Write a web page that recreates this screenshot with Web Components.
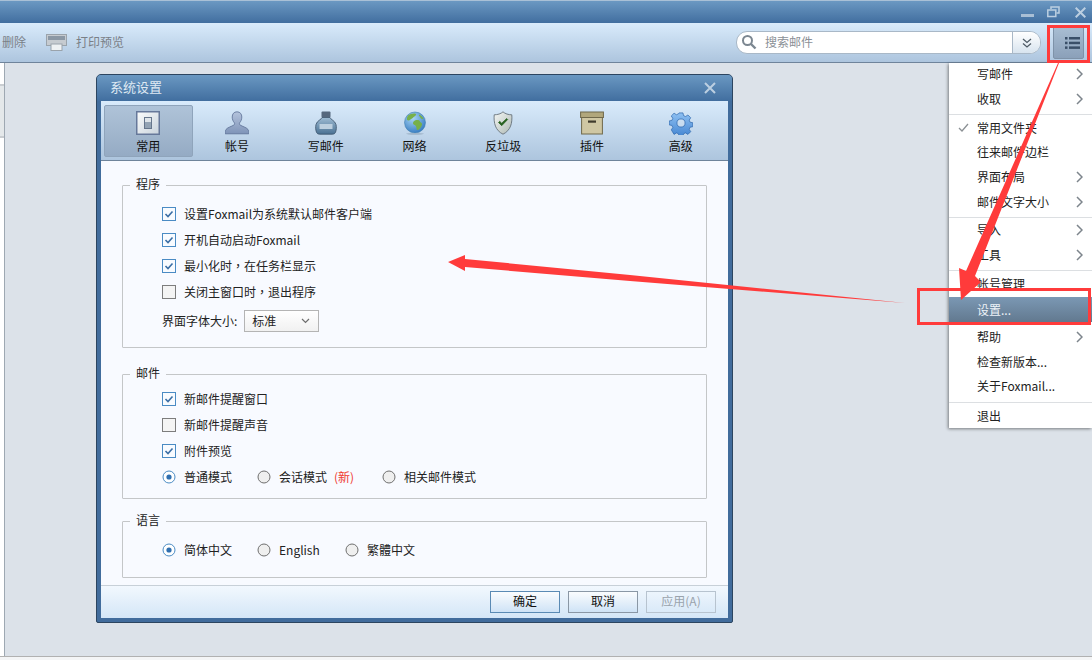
<!DOCTYPE html>
<html lang="zh">
<head>
<meta charset="utf-8">
<title>Foxmail 系统设置</title>
<style>
html, body { margin:0; padding:0; height:100%; overflow:hidden; }
body { font:12px "Noto Sans CJK SC", "Liberation Sans", sans-serif; color:#222; }
.tc { font-family:"Noto Sans CJK TC", sans-serif; }
</style>
</head>
<body>
<fm-app>
	<fm-dialog slot="dialog">
		<fm-group label="程序" style="height:163px;margin-bottom:26px;padding-top:15px">
			<div style="display:flex;flex-direction:column;">
				<fm-check checked>设置Foxmail为系统默认邮件客户端</fm-check>
				<fm-check checked>开机自动启动Foxmail</fm-check>
				<fm-check checked>最小化时<span class="tc" lang="zh-Hant">，</span>在任务栏显示</fm-check>
				<fm-check>关闭主窗口时<span class="tc" lang="zh-Hant">，</span>退出程序</fm-check>
				<fm-select label="界面字体大小:" value="标准"></fm-select>
			</div>
		</fm-group>
		<fm-group label="邮件" style="height:125px;margin-bottom:22px;padding-top:11px">
			<div style="display:flex;flex-direction:column;">
				<fm-check checked>新邮件提醒窗口</fm-check>
				<fm-check>新邮件提醒声音</fm-check>
				<fm-check checked>附件预览</fm-check>
				<div style="display:flex;">
					<fm-radio checked style="width:95px">普通模式</fm-radio>
					<fm-radio style="width:125px">会话模式<span style="color:#f0392f;margin-left:7px">(新)</span></fm-radio>
					<fm-radio>相关邮件模式</fm-radio>
				</div>
			</div>
		</fm-group>
		<fm-group label="语言" style="height:57px;padding-top:15px">
			<div style="display:flex;">
				<fm-radio checked style="width:95px">简体中文</fm-radio>
				<fm-radio style="width:88px">English</fm-radio>
				<fm-radio>繁體中文</fm-radio>
			</div>
		</fm-group>
	</fm-dialog>
	<fm-menu slot="menu"></fm-menu>
</fm-app>

<script>
const ICONS = {
	general: `<svg width="24" height="24" viewBox="0 0 24 24"><defs><linearGradient id="gn" x1="0" y1="0" x2="1" y2="1"><stop offset="0" stop-color="#fbfcfc"/><stop offset="1" stop-color="#c9d3dc"/></linearGradient></defs><rect x=".75" y=".75" width="22.5" height="22.5" fill="url(#gn)" stroke="#66789a" stroke-width="1.5"/><rect x="8.500" y="6.500" width="7" height="11" fill="#dfe5ea" stroke="#66768c"/><rect x="9" y="11" width="6" height="6" fill="#93a3b4"/></svg>`,
	account: `<svg width="24" height="24" viewBox="0 0 24 24"><defs><linearGradient id="a" x1="0" y1="0" x2="0" y2="1"><stop offset="0" stop-color="#b4c3dc"/><stop offset="1" stop-color="#7f94b8"/></linearGradient></defs><path d="M12 .8c3.200 0 4.800 2.400 4.800 5.200 0 2.500-1 4.500-2.100 5.700-.5.500-.3 1.900.5 2.400 2.200 1.300 6.300 2.400 7.800 4.400.7 1 .8 2.200.8 4.300H.2c0-2.100.1-3.300.8-4.300 1.500-2 5.600-3.100 7.800-4.400.8-.5 1-1.900.5-2.400C8.200 10.500 7.200 8.500 7.200 6c0-2.800 1.600-5.200 4.800-5.200z" fill="url(#a)" stroke="#5b6f94" stroke-width=".8"/></svg>`,
	write: `<svg width="24" height="24" viewBox="0 0 24 24"><defs><linearGradient id="w" x1="0" y1="0" x2="0" y2="1"><stop offset="0" stop-color="#9dbbd3"/><stop offset="1" stop-color="#4a7193"/></linearGradient></defs><rect x="7.500" y=".6" width="9" height="6" rx="1" fill="#55677d"/><path d="M8 6.500h8c.3 2 5 3 6 7 .6 2.500.4 6-.6 8-.5 1-1.500 1.700-3 1.700H5.600c-1.500 0-2.500-.7-3-1.700-1-2-1.200-5.500-.6-8 1-4 5.700-5 6-7z" fill="url(#w)" stroke="#3a5068" stroke-width=".8"/><rect x="5.500" y="13" width="13" height="5" fill="#bccfdf"/></svg>`,
	network: `<svg width="24" height="24" viewBox="0 0 24 24"><defs><radialGradient id="g" cx=".4" cy=".3" r=".8"><stop offset="0" stop-color="#a9d6f4"/><stop offset="1" stop-color="#2b73bd"/></radialGradient></defs><circle cx="12" cy="11.500" r="10.500" fill="url(#g)" stroke="#3f7dae" stroke-width=".6"/><path d="M5 4.500c2-1.500 5-2.400 7-2 1.500.3 1.500 1.600 0 2.500-1.500.8-1.800 2-3 2.400-1.300.4-1.700 1.800-3.600 2C4 9.500 3 8 5 4.500zM12 9.500c2-.8 4.500-.5 5 1 .4 1.500 2.300 1 2 3-.3 2.200-2.600 5-4.200 5.500-1.500.5-1-2.300-1.800-3.800-.8-1.400-3.200-1.400-3-3.200.1-1.200 1-1.900 2-2.500zM16 3.600c2 .7 3.800 2.400 4.500 4.400-1.300.3-2.500-.6-3.200-1.600C16.600 5.500 15.500 4.500 16 3.600z" fill="#77b04a"/><ellipse cx="12" cy="22.800" rx="9" ry=".9" fill="#9fb4c8"/></svg>`,
	shield: `<svg width="24" height="24" viewBox="0 0 24 24"><defs><linearGradient id="s" x1="0" y1="0" x2="1" y2="1"><stop offset="0" stop-color="#f5f7f5"/><stop offset="1" stop-color="#aeb9b4"/></linearGradient></defs><path d="M12 .8c2 2 5.500 3 8.800 3 .6 8.200-1 15.500-8.800 19.400C4.200 19.300 2.600 12 3.200 3.800 6.500 3.800 10 2.800 12 .8z" fill="url(#s)" stroke="#66727b" stroke-width=".9"/><path d="M7.500 11.500l3.200 3.200 6-6.200-1-1-5 4.700-2-1.900z" fill="#27611f" stroke="#27611f" stroke-width=".7"/></svg>`,
	plugin: `<svg width="24" height="24" viewBox="0 0 24 24"><rect x=".6" y="1" width="22.800" height="5.500" fill="#b1a77c" stroke="#6f684a"/><rect x="1.600" y="6.500" width="20.800" height="16.500" fill="#cfc7a3" stroke="#6f684a"/><rect x="8" y="9.500" width="8" height="2.200" fill="#3f3b2c"/></svg>`,
	gear: `<svg width="24" height="24" viewBox="0 0 24 24"><defs><linearGradient id="h" x1="0" y1="0" x2="0" y2="1"><stop offset="0" stop-color="#8ec0f2"/><stop offset="1" stop-color="#4486d2"/></linearGradient></defs><path fill-rule="evenodd" d="M9.800.8h4.400l.6 3 2.300 1 2.600-1.700 3.100 3.100-1.700 2.600 1 2.300 3 .6v4.400l-3 .6-1 2.300 1.700 2.600-3.100 3.100-2.600-1.700-2.300 1-.6 3H9.800l-.6-3-2.300-1-2.600 1.700L1.200 19.600l1.700-2.600-1-2.300-3-.6V9.700l3-.6 1-2.300L1.200 4.200 4.300 1.100l2.600 1.700 2.300-1zM12 7.500a4.500 4.500 0 1 0 0 9 4.500 4.500 0 0 0 0-9z" transform="translate(1.200 1.200) scale(.9)" fill="url(#h)" stroke="#2f69ae" stroke-width=".8"/></svg>`,
	printer: `<svg width="21" height="17" viewBox="0 0 21 17"><rect x=".5" y=".5" width="20" height="11" fill="#c6cbd0" stroke="#9aa3ab"/><rect x="2" y="2" width="17" height="4" fill="#8b98a5"/><rect x="5" y="10" width="11" height="6.500" fill="#eef1f3" stroke="#9aa3ab"/></svg>`,
	search: `<svg width="16" height="16" viewBox="0 0 16 16" fill="none"><circle cx="6.500" cy="6.500" r="4.500" stroke="#7c8791" stroke-width="2"/><path d="M10 10l4.500 4.500" stroke="#7c8791" stroke-width="2.400"/></svg>`,
	double: `<svg width="10" height="10" viewBox="0 0 10 10" fill="none" stroke="#4f5b66" stroke-width="1.300"><path d="M1 1l4 3.500L9 1M1 5.500L5 9l4-3.500"/></svg>`,
	list: `<svg width="15" height="12" viewBox="0 0 15 12" fill="#3a4f68"><rect x="0" y="0" width="2.500" height="2.500"/><rect x="4" y="0" width="11" height="2.500"/><rect x="0" y="4.700" width="2.500" height="2.500"/><rect x="4" y="4.700" width="11" height="2.500"/><rect x="0" y="9.400" width="2.500" height="2.500"/><rect x="4" y="9.400" width="11" height="2.500"/></svg>`,
	chevron: `<svg width="7" height="12" viewBox="0 0 7 12" fill="none" stroke="#7d858c" stroke-width="1.500"><path d="M1 1l5 5-5 5"/></svg>`,
	tick: `<svg width="11" height="9" viewBox="0 0 11 9" fill="none" stroke="#8b9094" stroke-width="1.300"><path d="M1 5l3 3 6-7"/></svg>`
};

const FONT = `"Noto Sans CJK SC", "Liberation Sans", sans-serif`;

customElements.define('fm-app', class extends HTMLElement {
	connectedCallback() {
		const root = this.attachShadow({mode: 'open'});
		root.innerHTML = `
		<style>
		:host { display:flex; flex-direction:column; position:relative; width:1092px; height:660px; overflow:hidden; background:#fff; font-family:${FONT}; }
		.title { flex:none; height:23px; box-sizing:border-box; border-top:1px solid #a9c0d6; background:linear-gradient(#6b98c2,#416e9f); display:flex; justify-content:flex-end; align-items:center; padding-right:6px; }
		.title svg { display:block; }
		.tools { flex:none; height:40px; box-sizing:border-box; border-bottom:1px solid #6f849b; background:linear-gradient(#d9ebfb,#adc5de); display:flex; align-items:center; color:#7a8087; font-size:12px; }
		.tools .del { margin-left:2px; padding-bottom:2px; }
		.tools .print { display:flex; align-items:center; gap:9px; margin-left:20px; }
		.tools .print span { padding-bottom:2px; }
		.search { margin-left:auto; width:305px; height:23px; box-sizing:border-box; border:1px solid #a9b8c7; border-radius:11px; background:#fff; display:flex; align-items:center; overflow:hidden; }
		.search .ico { margin:2px 0 0 4px; width:20px; }
		.search .ph { flex:1; padding:0 0 2px 4px; color:#8b9096; }
		.search .drop { width:27px; height:100%; border-left:1px solid #a9b8c7; background:linear-gradient(#fff,#d8e4ef); display:flex; align-items:center; justify-content:center; }
		.listbtn { margin:0 8px 0 12px; width:31px; height:33px; box-sizing:border-box; border:1px solid #7e92a8; border-radius:2px; padding-left:7px; background:linear-gradient(#a9bed3,#8ba0b9); display:flex; align-items:center; justify-content:center; }
		.main { flex:1; background:#dce2e9; border-bottom:1px solid #b1b1b1; display:flex; }
		.side { width:4px; background:#fff; border-right:1px solid #9ea8b2; position:relative; }
		.side i { position:absolute; left:0; top:21px; width:4px; height:54px; background:#e4e8ea; border-top:2px solid #c9cdd1; border-bottom:2px solid #c9cdd1; box-sizing:border-box; }
		.foot { flex:none; height:3px; background:#f4f5f6; }
		.mark { position:absolute; box-sizing:border-box; border:3px solid #ff3b3b; }
		svg.ink { position:absolute; left:0; top:0; pointer-events:none; }
		</style>
		<div class="title">
			<svg width="13" height="12" viewBox="0 0 13 12" style="margin-right:13px"><rect x="0" y="8" width="13" height="3" fill="#a9bfd5"/></svg>
			<svg width="13" height="12" viewBox="0 0 13 12" fill="none" stroke="#bccfe1" stroke-width="1.500" style="margin-right:15px"><rect x=".8" y="4" width="8" height="6.500"/><path d="M4 3V1h8v6H9.500"/></svg>
			<svg width="11" height="11" viewBox="0 0 11 11" stroke="#bccfe1" stroke-width="2"><path d="M.7.7l9.600 9.600M10.300.7L.7 10.300"/></svg>
		</div>
		<div class="tools">
			<span class="del">删除</span>
			<span class="print">${ICONS.printer}<span>打印预览</span></span>
			<div class="search">
				<span class="ico">${ICONS.search}</span>
				<span class="ph">搜索邮件</span>
				<span class="drop">${ICONS.double}</span>
			</div>
			<div class="listbtn">${ICONS.list}</div>
		</div>
		<div class="main"><div class="side"><i></i></div></div>
		<div class="foot"></div>
		<slot name="dialog"></slot>
		<slot name="menu"></slot>
		<div class="mark" style="left:1047px;top:25px;width:43px;height:38px"></div>
		<div class="mark" style="left:917px;top:288px;width:174px;height:37px"></div>
		<svg class="ink" width="1092" height="660" viewBox="0 0 1092 660">
			<path d="M1059 63 L975 276 L981 282 L961 300 L959 268 L966 271 L1058 63Z" fill="#ff3b3b"/>
			<path d="M905 303 L630 281 L465 267 L465 271 L448 262 L465 255 L465 259 L630 275Z" fill="#ff3b3b"/>
		</svg>`;
	}
});

customElements.define('fm-dialog', class extends HTMLElement {
	connectedCallback() {
		const tabs = [['general', '常用'], ['account', '帐号'], ['write', '写邮件'], ['network', '网络'], ['shield', '反垃圾'], ['plugin', '插件'], ['gear', '高级']];
		const root = this.attachShadow({mode: 'open'});
		root.innerHTML = `
		<style>
		:host { display:flex; flex-direction:column; position:absolute; left:96px; top:74px; width:637px; height:549px; box-sizing:border-box; border:1px solid #2c4560; border-radius:5px 5px 2px 2px; background:#416c9c; padding:0 4px 4px; font-family:${FONT}; font-size:12px; color:#222; }
		.head { flex:none; height:26px; background:linear-gradient(#6a98c2,#416e9f); margin:0 -4px; padding:0 16px 0 13px; display:flex; align-items:center; justify-content:space-between; color:#dfe9f3; font-size:13px; border-radius:4px 4px 0 0; }
		.head span { padding-bottom:4px; }
		.tabs { flex:none; height:60px; box-sizing:border-box; padding:4px 3px 0; border-bottom:1px solid #6f849b; background:linear-gradient(#d9ebfb,#adc5de); display:flex; }
		.tab { width:89px; height:52px; box-sizing:border-box; border:1px solid transparent; border-radius:2px; display:flex; flex-direction:column; align-items:center; padding-top:5px; color:#111; }
		.tab.on { background:linear-gradient(#afc3d8,#95abc4); border-color:#8fa4bb; }
		.tab svg { display:block; }
		.tab span { margin-top:3px; line-height:16px; }
		.body { flex:1; min-height:0; background:#f8faff; padding:24px 21px 0; }
		.foot { flex:none; height:33px; box-sizing:border-box; border-top:1px solid #c8d0d8; background:linear-gradient(#f2f8fe,#d4e6f7); display:flex; justify-content:flex-end; align-items:center; gap:8px; padding-right:12px; }
		.btn { width:70px; height:22px; box-sizing:border-box; border:1px solid #8a97a5; background:linear-gradient(#fafcfe,#cfe3f6); text-align:center; line-height:18px; color:#111; }
		.btn.def { border-color:#5a8ab4; }
		.btn.off { border-color:#b7c3cf; color:#9aa3ac; background:none; }
		</style>
		<div class="head"><span>系统设置</span>
			<svg width="12" height="12" viewBox="0 0 12 12" stroke="#bccfe1" stroke-width="2"><path d="M1 1l10 10M11 1L1 11"/></svg>
		</div>
		<div class="tabs">${tabs.map(([icon, name], i) => `<div class="tab${i ? '' : ' on'}">${ICONS[icon]}<span>${name}</span></div>`).join('')}</div>
		<div class="body"><slot></slot></div>
		<div class="foot"><div class="btn def">确定</div><div class="btn">取消</div><div class="btn off">应用(A)</div></div>`;
	}
});

customElements.define('fm-group', class extends HTMLElement {
	connectedCallback() {
		const root = this.attachShadow({mode: 'open'});
		root.innerHTML = `
		<style>
		:host { display:block; box-sizing:border-box; border:1px solid #c4c6c8; border-radius:1px; position:relative; padding-left:39px; }
		.label { position:absolute; left:7px; top:-10px; padding:0 6px; background:#f8faff; line-height:16px; }
		</style>
		<span class="label">${this.getAttribute('label')}</span>
		<slot></slot>`;
	}
});

const OPTION_STYLE = `
	:host { display:flex; align-items:center; height:26px; gap:8px; color:#222; white-space:nowrap; }
	svg { display:block; flex:none; }
	.txt { padding-bottom:2px; }
`;

customElements.define('fm-check', class extends HTMLElement {
	connectedCallback() {
		const on = this.hasAttribute('checked');
		const root = this.attachShadow({mode: 'open'});
		root.innerHTML = `
		<style>${OPTION_STYLE}</style>
		<svg width="14" height="14" viewBox="0 0 14 14">
			<rect x=".5" y=".5" width="13" height="13" fill="${on ? '#f8fbff' : '#f4f4f4'}" stroke="${on ? '#4a8bc4' : '#7d7d7d'}"/>
			${on ? '<path d="M3.500 7l2.500 2.500 4.500-5" fill="none" stroke="#3a6ea5" stroke-width="1.600"/>' : ''}
		</svg>
		<span class="txt"><slot></slot></span>`;
	}
});

customElements.define('fm-radio', class extends HTMLElement {
	connectedCallback() {
		const on = this.hasAttribute('checked');
		const root = this.attachShadow({mode: 'open'});
		root.innerHTML = `
		<style>${OPTION_STYLE}</style>
		<svg width="14" height="14" viewBox="0 0 14 14">
			<circle cx="7" cy="7" r="6" fill="${on ? '#fff' : '#efefef'}" stroke="${on ? '#4a8bc4' : '#6f6f6f'}"/>
			${on ? '<circle cx="7" cy="7" r="2.600" fill="#2f6fb0"/>' : ''}
		</svg>
		<span class="txt"><slot></slot></span>`;
	}
});

customElements.define('fm-select', class extends HTMLElement {
	connectedCallback() {
		const root = this.attachShadow({mode: 'open'});
		root.innerHTML = `
		<style>
		:host { display:flex; align-items:center; height:26px; gap:7px; margin-top:3px; color:#222; }
		.box { width:75px; height:22px; box-sizing:border-box; border:1px solid #b4b4b4; background:linear-gradient(#fff,#f1f1f1); display:flex; align-items:center; justify-content:space-between; padding:0 8px 0 7px; }
		span { padding-bottom:2px; }
		</style>
		<span>${this.getAttribute('label')}</span>
		<div class="box"><span>${this.getAttribute('value')}</span>
			<svg width="9" height="6" viewBox="0 0 9 6" fill="none" stroke="#6e6e6e" stroke-width="1.200"><path d="M1 1l3.500 3.500L8 1"/></svg>
		</div>`;
	}
});

customElements.define('fm-menu', class extends HTMLElement {
	connectedCallback() {
		const groups = [
			[['写邮件', 1], ['收取', 1]],
			[['常用文件夹', 0, 1], ['往来邮件边栏'], ['界面布局', 1], ['邮件文字大小', 1]],
			[['导入', 1], ['工具', 1]],
			[['帐号管理'], ['设置...', 0, 0, 1]],
			[['帮助', 1], ['检查新版本...'], ['关于Foxmail...']],
			[['退出']]
		];
		const row = ([text, sub, tick, hot]) => `<div class="row${hot ? ' hot' : ''}">
			<span class="tick">${tick ? ICONS.tick : ''}</span><span class="text">${text}</span>${sub ? ICONS.chevron : ''}</div>`;
		const root = this.attachShadow({mode: 'open'});
		root.innerHTML = `
		<style>
		:host { display:block; position:absolute; left:949px; top:63px; width:143px; height:365px; box-sizing:border-box; background:#fff; box-shadow:-1px 1px 3px rgba(0,0,0,.45); font-family:${FONT}; font-size:12px; color:#222; }
		.row { height:24.600px; display:flex; align-items:center; padding-right:9px; }
		.row.hot { height:25px; margin-top:.700px; background:linear-gradient(#7b98b4,#62798f); color:#eef3f8; }
		.tick { width:28px; display:flex; justify-content:center; flex:none; }
		.text { flex:1; padding-bottom:1px; }
		.group { border-top:1px solid #dcdfe2; margin-top:3px; padding-top:.700px; }
		.group:nth-of-type(1) { border-top:0; margin-top:-1.300px; padding-top:0; }
		.group:nth-of-type(3) { padding-top:0; }
		.group:nth-of-type(5) { border-top:0; margin-top:2.700px; padding-top:0; }
		</style>
		${groups.map(g => `<div class="group">${g.map(row).join('')}</div>`).join('')}`;
	}
});
</script>
</body>
</html>
